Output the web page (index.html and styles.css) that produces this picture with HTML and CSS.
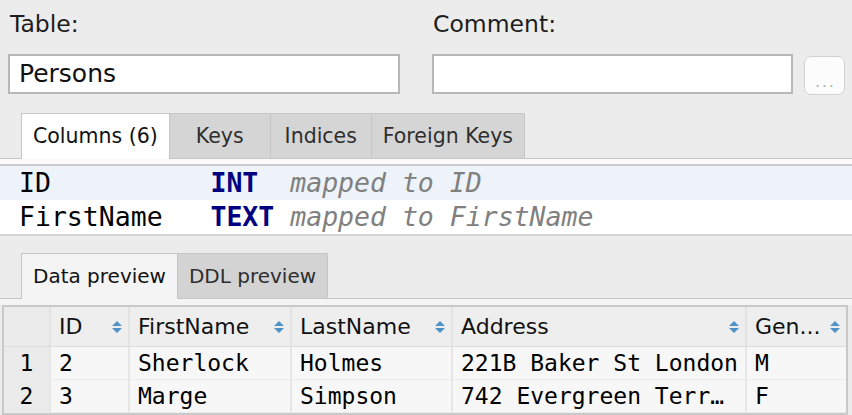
FILE: index.html
```html
<!DOCTYPE html>
<html>
<head>
<meta charset="utf-8">
<title>Table editor</title>
<link rel="stylesheet" href="styles.css">
</head>
<body>
<div class="window">
  <div class="form">
    <div class="field">
      <div class="label">Table:</div>
      <div class="input">Persons</div>
    </div>
    <div class="field">
      <div class="label label-right">Comment:</div>
      <div class="input-row">
        <div class="input input-comment"></div>
        <div class="more-btn">...</div>
      </div>
    </div>
  </div>

  <div class="tabs">
    <div class="tab active">Columns (6)</div>
    <div class="tab">Keys</div>
    <div class="tab">Indices</div>
    <div class="tab">Foreign Keys</div>
  </div>
  <div class="tab-band"></div>
  <div class="col-list">
    <div class="col-row selected"><span class="c-name">ID          </span><span class="c-type">INT  </span><span class="c-map">mapped to ID</span></div>
    <div class="col-row"><span class="c-name">FirstName   </span><span class="c-type">TEXT </span><span class="c-map">mapped to FirstName</span></div>
  </div>

  <div class="tabs tabs-data">
    <div class="tab active">Data preview</div>
    <div class="tab">DDL preview</div>
  </div>
  <div class="tab-band band-data"></div>
  <div class="grid">
    <div class="hcell rownum"></div>
    <div class="hcell"><span>ID</span><svg class="sort" viewBox="0 0 10 14" width="10" height="14"><path d="M0 6 L5 1 L10 6 Z M0 8 L5 13 L10 8 Z"/></svg></div>
    <div class="hcell"><span>FirstName</span><svg class="sort" viewBox="0 0 10 14" width="10" height="14"><path d="M0 6 L5 1 L10 6 Z M0 8 L5 13 L10 8 Z"/></svg></div>
    <div class="hcell"><span>LastName</span><svg class="sort" viewBox="0 0 10 14" width="10" height="14"><path d="M0 6 L5 1 L10 6 Z M0 8 L5 13 L10 8 Z"/></svg></div>
    <div class="hcell"><span>Address</span><svg class="sort" viewBox="0 0 10 14" width="10" height="14"><path d="M0 6 L5 1 L10 6 Z M0 8 L5 13 L10 8 Z"/></svg></div>
    <div class="hcell last"><span>Gen...</span><svg class="sort" viewBox="0 0 10 14" width="10" height="14"><path d="M0 6 L5 1 L10 6 Z M0 8 L5 13 L10 8 Z"/></svg></div>

    <div class="cell rownum">1</div>
    <div class="cell">2</div>
    <div class="cell">Sherlock</div>
    <div class="cell">Holmes</div>
    <div class="cell">221B Baker St London</div>
    <div class="cell last">M</div>

    <div class="cell rownum">2</div>
    <div class="cell">3</div>
    <div class="cell">Marge</div>
    <div class="cell">Simpson</div>
    <div class="cell">742 Evergreen Terr…</div>
    <div class="cell last">F</div>
  </div>
</div>
</body>
</html>
```

FILE: styles.css
```css
html, body {
  margin: 0;
  padding: 0;
  background: #ececec;
}

.window {
  width: 852px;
  height: 415px;
  overflow: hidden;
  background: #ececec;
  font-family: "DejaVu Sans", "Liberation Sans", sans-serif;
  color: #1a1a1a;
}

/* ---------- top form ---------- */
.form {
  display: grid;
  grid-template-columns: 392px 413px;
  column-gap: 32px;
  padding: 11px 0 0 8px;
}

.label {
  font-size: 23.5px;
  line-height: 26px;
  height: 26px;
  padding-left: 2px;
  margin-bottom: 17px;
  color: #1d1d1d;
}

.label-right {
  padding-left: 1px;
}

.input {
  box-sizing: border-box;
  height: 40px;
  border: 2px solid #b8b8b8;
  background: #ffffff;
  padding-left: 9px;
  font-size: 25px;
  line-height: 36px;
  color: #111;
}

.input-row {
  display: flex;
  align-items: flex-start;
  gap: 11px;
}

.input-comment {
  width: 361px;
}

.more-btn {
  box-sizing: border-box;
  width: 41px;
  height: 39px;
  margin-top: 2px;
  border: 1px solid #d2d2d2;
  border-radius: 7px;
  background: #fcfcfc;
  color: #acacac;
  font-size: 15px;
  letter-spacing: 2px;
  display: flex;
  align-items: flex-end;
  justify-content: center;
  padding: 0 0 4px 2px;
  line-height: 16px;
}

/* ---------- tabs ---------- */
.tabs {
  display: flex;
  align-items: flex-start;
  height: 45px;
  margin-top: 18px;
  padding-left: 21px;
}

.tab {
  box-sizing: border-box;
  height: 45px;
  min-width: 102px;
  padding: 0 11px;
  margin-right: -1px;
  border: 1px solid #c6c6c6;
  border-bottom: 0;
  background: #d5d5d5;
  font-size: 20.5px;
  line-height: 44px;
  text-align: center;
  color: #2e2e2e;
  white-space: nowrap;
}

.tab.active {
  position: relative;
  z-index: 1;
  height: 46px;
  background: #ffffff;
  color: #111;
}

.tab-band {
  height: 5px;
  border-top: 1px solid #c6c6c6;
  background: #fafafa;
}

/* ---------- column list ---------- */
.col-list {
  border-top: 2px solid #cbcbcb;
  border-bottom: 2px solid #d4d4d4;
  background: #ffffff;
}

.col-row {
  height: 34px;
  line-height: 34px;
  padding-left: 19px;
  font-family: "DejaVu Sans Mono", "Liberation Mono", monospace;
  font-size: 26.5px;
  white-space: pre;
  color: #000;
}

.col-row.selected {
  background: #eef2f9;
}

.c-type {
  font-weight: bold;
  color: #000080;
}

.c-map {
  font-style: italic;
  color: #808080;
}

/* ---------- data tabs ---------- */
.tabs-data {
  margin-top: 17px;
}

.tabs-data .tab {
  padding: 0 11px;
  font-size: 20px;
  background: #d3d3d3;
}

.tabs-data .tab.active {
  background: #f4f4f4;
}

.band-data {
  height: 6px;
  background: #f4f4f4;
}

/* ---------- data grid ---------- */
.grid {
  display: grid;
  grid-template-columns: 47px 79px 162px 161px 294px 1fr;
  grid-auto-rows: 33px;
  grid-template-rows: 40px;
  margin: 0 4px 0 2px;
  border: 2px solid #c9c9c9;
  background: #f7f7f7;
}

.hcell {
  display: flex;
  align-items: center;
  justify-content: space-between;
  padding: 0 6px 0 8px;
  background: #eeeeee;
  border-right: 2px solid #e2e2e2;
  border-bottom: 1px solid #dcdcdc;
  font-size: 22px;
  color: #111;
  white-space: nowrap;
  overflow: hidden;
}

.hcell.last,
.cell.last {
  border-right: 0;
}

.sort {
  flex: none;
  fill: #4e92c6;
}

.cell {
  padding: 0 8px;
  border-right: 2px solid #e6e6e6;
  border-bottom: 1px solid #ececec;
  font-family: "DejaVu Sans Mono", "Liberation Mono", monospace;
  font-size: 23px;
  line-height: 33px;
  color: #000;
  white-space: pre;
  overflow: hidden;
}

.rownum {
  background: #ebebeb;
  text-align: center;
  padding: 0;
}
```
